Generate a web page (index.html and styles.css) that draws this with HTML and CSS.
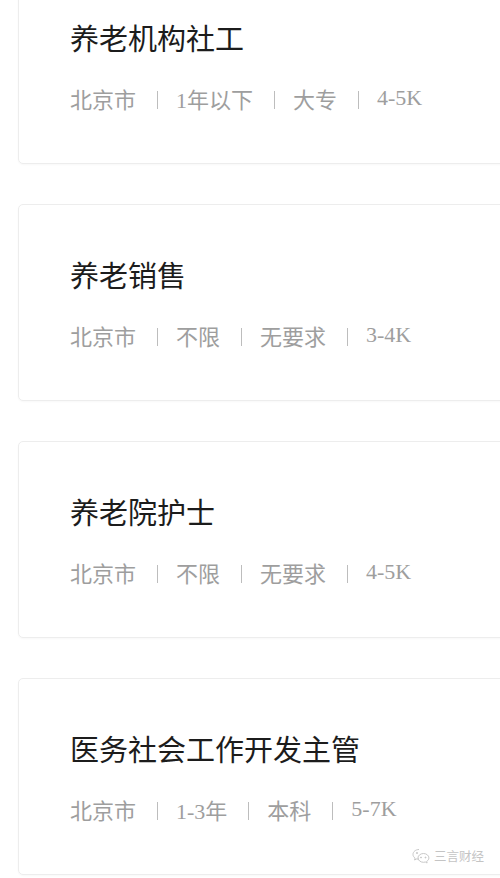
FILE: index.html
```html
<!DOCTYPE html>
<html lang="zh-CN">
<head>
    <meta charset="UTF-8">
    <meta name="viewport" content="width=device-width, initial-scale=1.0">
    <title>养老岗位</title>
    <link rel="stylesheet" href="styles.css">
</head>
<body>
    <div class="job-list">
        <div class="job-card">
            <h2 class="job-title">养老机构社工</h2>
            <div class="job-meta">
                <span>北京市</span><span class="sep"></span>
                <span>1年以下</span><span class="sep"></span>
                <span>大专</span><span class="sep"></span>
                <span>4-5K</span>
            </div>
        </div>

        <div class="job-card">
            <h2 class="job-title">养老销售</h2>
            <div class="job-meta">
                <span>北京市</span><span class="sep"></span>
                <span>不限</span><span class="sep"></span>
                <span>无要求</span><span class="sep"></span>
                <span>3-4K</span>
            </div>
        </div>

        <div class="job-card">
            <h2 class="job-title">养老院护士</h2>
            <div class="job-meta">
                <span>北京市</span><span class="sep"></span>
                <span>不限</span><span class="sep"></span>
                <span>无要求</span><span class="sep"></span>
                <span>4-5K</span>
            </div>
        </div>

        <div class="job-card">
            <h2 class="job-title">医务社会工作开发主管</h2>
            <div class="job-meta">
                <span>北京市</span><span class="sep"></span>
                <span>1-3年</span><span class="sep"></span>
                <span>本科</span><span class="sep"></span>
                <span>5-7K</span>
            </div>
            <div class="watermark">
                <svg class="wm-icon" width="18" height="16" viewBox="0 0 18 16" fill="none" stroke="#c8c8c8" stroke-width="1">
                    <path d="M7 1.5C3.7 1.5 1 3.7 1 6.4c0 1.5.8 2.8 2.1 3.7L2.6 12l2.1-1.1c.7.2 1.5.3 2.3.3"/>
                    <path d="M11.5 5.5c-3 0-5.5 2-5.5 4.4s2.5 4.4 5.5 4.4c.6 0 1.2-.1 1.8-.3l1.8 1-.4-1.7c1.3-.8 2.2-2 2.2-3.4 0-2.4-2.5-4.4-5.4-4.4z"/>
                    <circle cx="5" cy="5" r=".6" fill="#c8c8c8"/>
                    <circle cx="9" cy="9.5" r=".5" fill="#c8c8c8"/>
                    <circle cx="13.5" cy="9.5" r=".5" fill="#c8c8c8"/>
                </svg>
                <span>三言财经</span>
            </div>
        </div>
    </div>
</body>
</html>
```

FILE: styles.css
```css
body {
    margin: 0;
    background: #fff;
    overflow: hidden;
    font-family: "Noto Sans CJK SC", sans-serif;
}
.job-list {
    margin-top: -33px;
    padding-left: 18px;
}
.job-card {
    position: relative;
    box-sizing: border-box;
    height: 197px;
    margin-right: -20px;
    margin-bottom: 40px;
    padding: 49px 0 0 51px;
    border: 1px solid #ededed;
    border-radius: 5px;
    box-shadow: 0 1px 2px rgba(0,0,0,0.03);
}
.job-title {
    margin: 0;
    font-size: 29px;
    line-height: 40px;
    font-weight: normal;
    color: #1c1c1c;
}
.job-meta {
    display: flex;
    align-items: center;
    margin-top: 26px;
    height: 30px;
    font-family: "Liberation Serif", "Noto Sans CJK SC", serif;
    font-size: 22px;
    color: #9e9e9e;
}
.sep {
    display: inline-block;
    width: 1px;
    height: 18px;
    margin: 3px 18px 0 21px;
    background: #bdbdbd;
}
.watermark {
    position: absolute;
    left: 393px;
    top: 167px;
    display: flex;
    align-items: center;
    gap: 4px;
    font-size: 12.5px;
    color: #c4c4c4;
}
```
